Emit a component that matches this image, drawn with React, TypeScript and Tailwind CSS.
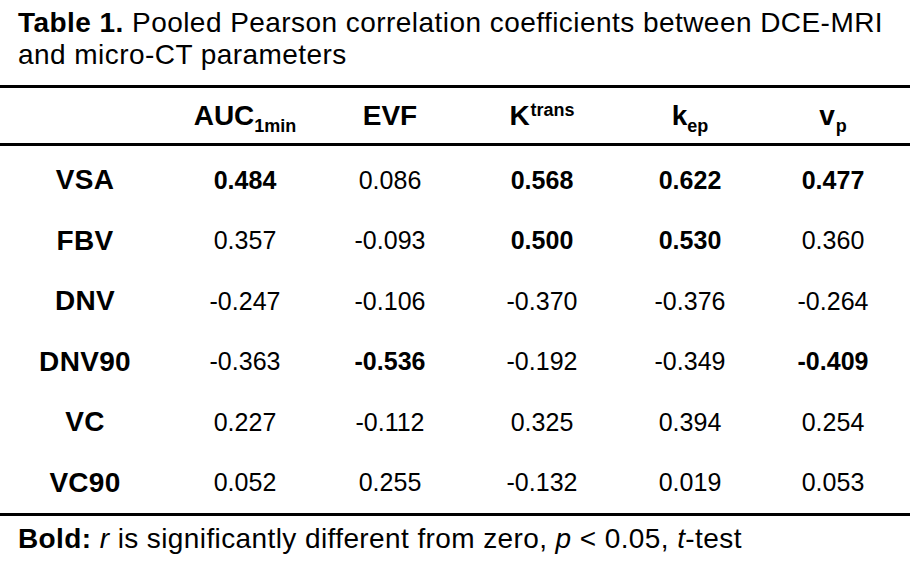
const cols = "grid grid-cols-[170px_150px_140px_164px_132px_154px]";

type Cell = { v: string; b?: boolean };

const rows: { label: string; cells: Cell[] }[] = [
  { label: "VSA", cells: [{ v: "0.484", b: true }, { v: "0.086" }, { v: "0.568", b: true }, { v: "0.622", b: true }, { v: "0.477", b: true }] },
  { label: "FBV", cells: [{ v: "0.357" }, { v: "-0.093" }, { v: "0.500", b: true }, { v: "0.530", b: true }, { v: "0.360" }] },
  { label: "DNV", cells: [{ v: "-0.247" }, { v: "-0.106" }, { v: "-0.370" }, { v: "-0.376" }, { v: "-0.264" }] },
  { label: "DNV90", cells: [{ v: "-0.363" }, { v: "-0.536", b: true }, { v: "-0.192" }, { v: "-0.349" }, { v: "-0.409", b: true }] },
  { label: "VC", cells: [{ v: "0.227" }, { v: "-0.112" }, { v: "0.325" }, { v: "0.394" }, { v: "0.254" }] },
  { label: "VC90", cells: [{ v: "0.052" }, { v: "0.255" }, { v: "-0.132" }, { v: "0.019" }, { v: "0.053" }] },
];

export default function App() {
  return (
    <div className="h-[572px] w-[912px] bg-white text-black font-['Liberation_Sans',Arial,sans-serif]">
      <p className="px-[18px] pt-[7px] text-[28px] leading-[32px] tracking-[0.45px]">
        <span className="font-bold">Table 1.</span> Pooled Pearson correlation coefficients between DCE-MRI
        <br />
        and micro-CT parameters
      </p>

      <div className="mt-[14px] w-[910px] border-t-[3px] border-black">
        {/* header */}
        <div className={`${cols} h-[58px] items-center border-b-[3px] border-black text-[28px] font-bold`}>
          <div />
          <div className="text-center">
            AUC<span className="relative top-[7px] align-baseline text-[18px]">1min</span>
          </div>
          <div className="text-center">EVF</div>
          <div className="text-center">
            K<span className="relative -top-[9px] ml-[1px] align-baseline text-[18px]">trans</span>
          </div>
          <div className="text-center">
            k<span className="relative top-[7px] align-baseline text-[18px]">ep</span>
          </div>
          <div className="text-center">
            v<span className="relative top-[7px] ml-[1px] align-baseline text-[18px]">p</span>
          </div>
        </div>

        {/* body */}
        <div className="pt-[4px] border-b-[3px] border-black">
          {rows.map((r) => (
            <div key={r.label} className={`${cols} h-[60.5px] items-center`}>
              <div className="text-center text-[28px] font-bold tracking-[0.3px]">{r.label}</div>
              {r.cells.map((c, i) => (
                <div key={i} className={`text-center text-[25px] ${c.b ? "font-bold" : ""}`}>
                  {c.v}
                </div>
              ))}
            </div>
          ))}
        </div>
      </div>

      <p className="px-[18px] pt-[7px] text-[28px] leading-[32px] tracking-[0.4px]">
        <span className="font-bold">Bold:</span> <i>r</i> is significantly different from zero, <i>p</i> &lt; 0.05, <i>t</i>-test
      </p>
    </div>
  );
}
